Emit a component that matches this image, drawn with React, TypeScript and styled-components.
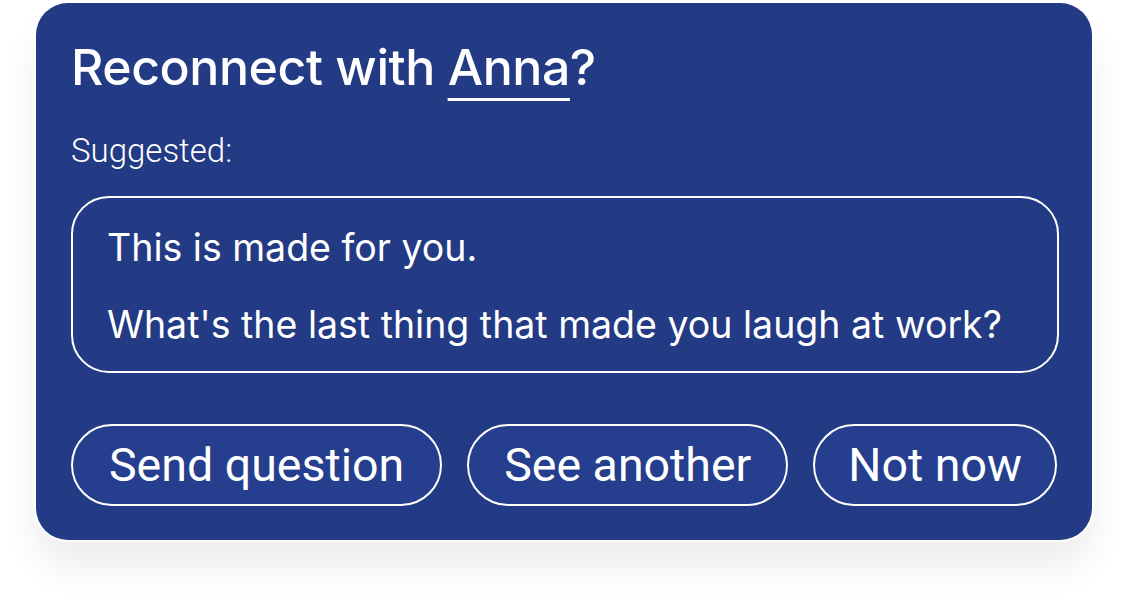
import styled, { createGlobalStyle } from 'styled-components';

const GlobalStyle = createGlobalStyle`
  html, body {
    margin: 0;
    padding: 0;
    background: #ffffff;
  }
  body {
    font-family: Inter, "Liberation Sans", sans-serif;
  }
`;

const Page = styled.div`
  width: 1130px;
  height: 616px;
  padding: 3px 0 0 36px;
  box-sizing: border-box;
`;

const Card = styled.div`
  width: 1056px;
  height: 537px;
  box-sizing: border-box;
  padding: 34px 33px 0 35px;
  background: #233a84;
  border-radius: 32px;
  box-shadow: 0 0 0 2px #ffffff, 0 28px 36px rgba(0, 0, 0, 0.07);
  display: flex;
  flex-direction: column;
  color: #ffffff;
`;

const Title = styled.h1`
  margin: 0;
  font-family: Inter, "Liberation Sans", sans-serif;
  font-size: 50px;
  font-weight: 500;
  line-height: 60px;
  letter-spacing: -0.45px;
`;

const Name = styled.span`
  text-decoration: underline;
  text-decoration-thickness: 3px;
  text-underline-offset: 13px;
`;

const Label = styled.div`
  margin-top: 34px;
  font-family: Roboto, "Liberation Sans", sans-serif;
  font-size: 33px;
  font-weight: 300;
  line-height: 39px;
`;

const Suggestion = styled.div`
  margin-top: 26px;
  border: 2px solid #ffffff;
  border-radius: 38px;
  padding: 27px 20px 24px 34px;
  display: flex;
  flex-direction: column;
  gap: 32px;
`;

const Line = styled.p`
  margin: 0;
  font-family: Inter, "Liberation Sans", sans-serif;
  font-size: 37.5px;
  font-weight: 400;
  line-height: 45px;
`;

const Actions = styled.div`
  margin-top: 51px;
  display: flex;
  gap: 25px;
`;

const Pill = styled.button<{ $pad?: number }>`
  flex: none;
  height: 82px;
  box-sizing: border-box;
  padding: 0 ${({ $pad = 36 }) => $pad}px;
  border: 2px solid #ffffff;
  border-radius: 41px;
  background: #253f8e;
  color: #ffffff;
  font-family: Roboto, "Liberation Sans", sans-serif;
  font-size: 46.5px;
  font-weight: 400;
  line-height: 1;
  white-space: nowrap;
  cursor: pointer;
`;

export default function App() {
  return (
    <>
      <GlobalStyle />
      <Page>
        <Card>
          <Title>
            Reconnect with <Name>Anna</Name>?
          </Title>
          <Label>Suggested:</Label>
          <Suggestion>
            <Line>This is made for you.</Line>
            <Line>What's the last thing that made you laugh at work?</Line>
          </Suggestion>
          <Actions>
            <Pill>Send question</Pill>
            <Pill $pad={35}>See another</Pill>
            <Pill $pad={33}>Not now</Pill>
          </Actions>
        </Card>
      </Page>
    </>
  );
}
